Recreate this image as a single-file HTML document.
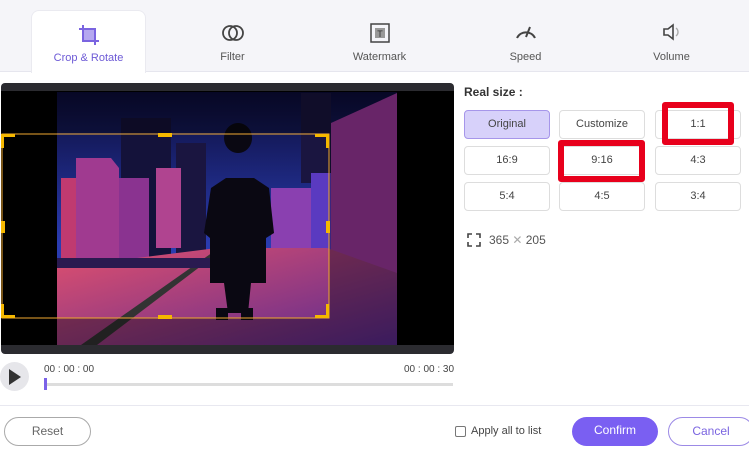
<!DOCTYPE html>
<html><head><meta charset="utf-8"><style>
*{box-sizing:border-box;margin:0;padding:0}
body{width:749px;height:450px;background:#fff;font-family:"Liberation Sans",sans-serif;position:relative;overflow:hidden;color:#333}
.tabs{position:absolute;left:0;top:0;width:749px;height:72px;background:#f5f5f9;border-bottom:1px solid #e6e6ee}
.tab{position:absolute;top:10px;height:63px;text-align:center;font-size:11px;color:#555}
.tab.act{background:#fff;border-radius:8px 8px 0 0;border:1px solid #eaeaf0;border-bottom:none;color:#6d5ad6}
.tab svg{position:absolute;left:50%;transform:translateX(-50%);top:12px}
.tab span{position:absolute;left:0;right:0;top:41px}
.btn{position:absolute;width:86px;height:29px;border:1px solid #ddd;border-radius:4px;font-size:11px;color:#444;text-align:center;line-height:27px;background:#fff}
.red{position:absolute;border:6px solid #e8001c;border-radius:3px}
.pill{position:absolute;height:29px;border-radius:15px;font-size:12px;text-align:center;line-height:27px}
</style></head><body>
<div class="tabs">
 <div class="tab act" style="left:31px;width:115px">
  <svg width="24" height="24" viewBox="0 0 24 24"><path d="M6 2v16h16" fill="none" stroke="#7a64e0" stroke-width="2"/><path d="M2 6h16v16" fill="none" stroke="#7a64e0" stroke-width="2"/><rect x="7" y="7" width="10" height="10" fill="#b5a8f0"/></svg>
  <span>Crop &amp; Rotate</span></div>
 <div class="tab" style="left:175px;width:115px">
  <svg width="24" height="22" viewBox="0 0 24 22"><circle cx="9" cy="11" r="7" fill="none" stroke="#444" stroke-width="1.8"/><circle cx="15" cy="11" r="7" fill="none" stroke="#444" stroke-width="1.8"/></svg>
  <span>Filter</span></div>
 <div class="tab" style="left:322px;width:115px">
  <svg width="22" height="22" viewBox="0 0 22 22"><rect x="2" y="2" width="18" height="18" fill="none" stroke="#444" stroke-width="1.5"/><rect x="6" y="6" width="10" height="10" fill="#999"/><text x="11" y="15" font-size="9" text-anchor="middle" fill="#333" font-family="Liberation Sans">T</text></svg>
  <span>Watermark</span></div>
 <div class="tab" style="left:468px;width:115px">
  <svg width="26" height="20" viewBox="0 0 26 20"><path d="M4 16A10 10 0 0 1 22 16" fill="none" stroke="#444" stroke-width="2"/><path d="M13 15L17 5" stroke="#444" stroke-width="2"/></svg>
  <span>Speed</span></div>
 <div class="tab" style="left:614px;width:115px">
  <svg width="22" height="20" viewBox="0 0 22 20"><path d="M3 7h4l5-4v14l-5-4H3z" fill="none" stroke="#444" stroke-width="1.6"/><path d="M15 6a5 5 0 0 1 0 8" fill="none" stroke="#aaa" stroke-width="1.4"/></svg>
  <span>Volume</span></div>
</div>

<svg style="position:absolute;left:1px;top:83px" width="453" height="271" viewBox="0 0 453 271">
 <defs><linearGradient id="sky" x1="0" y1="0" x2="0" y2="1"><stop offset="0" stop-color="#0c0c3a"/><stop offset="0.6" stop-color="#2a3cb0"/></linearGradient>
 <linearGradient id="road" x1="0" y1="0" x2="1" y2="1"><stop offset="0" stop-color="#e0506e"/><stop offset="1" stop-color="#5a2a90"/></linearGradient></defs>
 <rect width="453" height="271" rx="4" fill="#2b2b30"/>
 <rect x="0" y="8" width="453" height="254" fill="#000"/>
 <rect x="56" y="9" width="340" height="253" fill="url(#sky)"/>
 <rect x="120" y="35" width="50" height="140" fill="#14123a"/>
 <rect x="175" y="60" width="30" height="110" fill="#1a1540"/>
 <path d="M75 75h35l8 10v100H75z" fill="#a03a90"/>
 <path d="M118 95h30v85h-30z" fill="#8a3390"/>
 <path d="M155 85h25v80h-25z" fill="#b04490"/>
 <path d="M60 95h15v80H60z" fill="#c03a70"/>
 <rect x="300" y="10" width="30" height="90" fill="#1a1540"/>
 <path d="M270 105h40v80h-40z" fill="#8a40b0"/>
 <path d="M330 40l66-30v190l-66-15z" fill="#a03aa0"/>
 <path d="M310 90h20v90h-20z" fill="#5a3ac0"/>
 <path d="M56 185l160-20 110 0 70 25v72H56z" fill="url(#road)"/>
 <path d="M80 262l135-95 6 0-125 95z" fill="#333"/>
 <rect x="56" y="175" width="160" height="10" fill="#2a1a50"/>
 <path d="M237 70a14 15 0 1 1 0.1 0zM210 105l15-10h28l15 10 5 45-8 5v45h-15l-3 30h-20l-4-30h-14v-45l-6-5z" fill="#0a0812"/>
 <rect x="215" y="225" width="12" height="12" fill="#0a0812"/><rect x="240" y="225" width="12" height="12" fill="#0a0812"/>
 <path d="M0 8h453v42H0zM0 235h453v27H0zM0 50h1v185H0zM328 50h125v185H328z" fill="#000" opacity="0.35"/>
 <rect x="1" y="51" width="327" height="184" fill="none" stroke="#f0a930" stroke-width="1"/>
 <g fill="#f5b800">
  <path d="M0 51h14v3H3v11H0zM328 51h-14v3h11v11h3zM0 235h14v-3H3v-11H0zM328 235h-14v-3h11v-11h3z"/>
  <rect x="157" y="50" width="14" height="4"/><rect x="157" y="232" width="14" height="4"/>
  <rect x="0" y="138" width="4" height="12"/><rect x="325" y="138" width="4" height="12"/>
 </g>
</svg>

<div style="position:absolute;left:0;top:362px;width:29px;height:29px;border-radius:50%;background:#e6e6ea"></div>
<div style="position:absolute;left:9px;top:369px;width:0;height:0;border-left:12px solid #333;border-top:8px solid transparent;border-bottom:8px solid transparent"></div>
<div style="position:absolute;left:44px;top:364px;font-size:10px;color:#444">00 : 00 : 00</div>
<div style="position:absolute;left:404px;top:364px;font-size:10px;color:#444">00 : 00 : 30</div>
<div style="position:absolute;left:44px;top:383px;width:409px;height:3px;background:#ddd"></div>
<div style="position:absolute;left:44px;top:378px;width:3px;height:12px;background:#7b62e8"></div>

<div style="position:absolute;left:464px;top:85px;font-size:12px;font-weight:bold;color:#333">Real size :</div>
<div class="btn" style="left:464px;top:110px;background:#d7d1fa;border-color:#a696ea">Original</div>
<div class="btn" style="left:559px;top:110px">Customize</div>
<div class="btn" style="left:655px;top:110px">1:1</div>
<div class="btn" style="left:464px;top:146px">16:9</div>
<div class="btn" style="left:559px;top:146px">9:16</div>
<div class="btn" style="left:655px;top:146px">4:3</div>
<div class="btn" style="left:464px;top:182px">5:4</div>
<div class="btn" style="left:559px;top:182px">4:5</div>
<div class="btn" style="left:655px;top:182px">3:4</div>
<div class="red" style="left:662px;top:102px;width:72px;height:43px"></div>
<div class="red" style="left:558px;top:140px;width:87px;height:42px"></div>
<svg style="position:absolute;left:467px;top:233px" width="14" height="14" viewBox="0 0 14 14"><path d="M1 5V1h4M9 1h4v4M13 9v4H9M5 13H1V9" fill="none" stroke="#444" stroke-width="1.6"/></svg>
<div style="position:absolute;left:489px;top:233px;font-size:12px;color:#555">365 <span style="color:#aaa">✕</span> 205</div>

<div style="position:absolute;left:0;top:405px;width:749px;height:1px;background:#e8e8f0"></div>
<div class="pill" style="left:4px;top:417px;width:87px;border:1px solid #aaa;color:#666">Reset</div>
<div style="position:absolute;left:455px;top:426px;width:11px;height:11px;border:1px solid #777;border-radius:2px"></div>
<div style="position:absolute;left:471px;top:425px;font-size:11px;color:#444">Apply all to list</div>
<div class="pill" style="left:572px;top:417px;width:86px;background:#7a5ff2;color:#fff">Confirm</div>
<div class="pill" style="left:668px;top:417px;width:86px;border:1px solid #9c8ae6;color:#7a64e0">Cancel</div>
</body></html>
